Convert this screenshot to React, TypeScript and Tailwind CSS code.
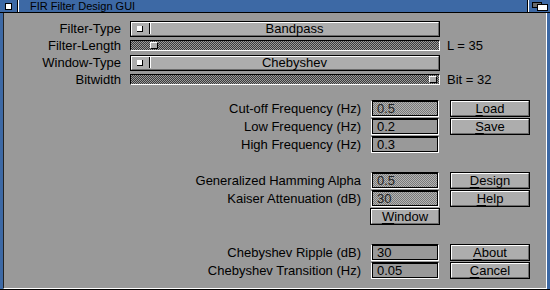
import React from "react";

type Row = {
  label: string;
  value?: string;
  dither?: boolean;
  btn?: string;
  window?: boolean;
} | null;

const rows: Row[] = [
  { label: "Cut-off Frequency (Hz)", value: "0.5", dither: true, btn: "Load" },
  { label: "Low Frequency (Hz)", value: "0.2", btn: "Save" },
  { label: "High Frequency (Hz)", value: "0.3" },
  null,
  { label: "Generalized Hamming Alpha", value: "0.5", dither: true, btn: "Design" },
  { label: "Kaiser Attenuation (dB)", value: "30", dither: true, btn: "Help" },
  { label: "", window: true },
  null,
  { label: "Chebyshev Ripple (dB)", value: "30", btn: "About" },
  { label: "Chebyshev Transition (Hz)", value: "0.05", btn: "Cancel" },
];

function Button({ text, width }: { text: string; width: string }) {
  return (
    <div className={`${width} h-[17px] border border-black bg-[#adadad]`}>
      <div className="h-full border border-t-white border-l-white border-b-[#6a6a6a] border-r-[#6a6a6a] flex items-center justify-center">
        <span>
          <span className="underline underline-offset-[2px]">{text[0]}</span>
          {text.slice(1)}
        </span>
      </div>
    </div>
  );
}

function Field({ value, dither }: { value: string; dither?: boolean }) {
  return (
    <div className="w-[68px] h-[17px] border-t border-t-black border-l border-l-white border-r border-r-white border-b border-b-white">
      <div
        className={`h-full border border-black flex items-center pl-[4px] ${
          dither
            ? "bg-[image:repeating-conic-gradient(#7a7a7a_0_25%,#b4b4b4_0_50%)] bg-[length:2px_2px] text-[#222]"
            : "bg-[#999999]"
        }`}
      >
        {value}
      </div>
    </div>
  );
}

function Cycle({ text }: { text: string }) {
  return (
    <div className="w-[310px] h-[16px] border border-black bg-[#adadad]">
      <div className="h-full border border-t-white border-l-white border-b-[#6a6a6a] border-r-[#6a6a6a] flex items-center">
        <div className="ml-[5px] w-[6px] h-[6px] bg-white border-r border-b border-black" />
        <div className="ml-[6px] h-[11px] w-[2px] flex">
          <div className="w-px bg-black" />
          <div className="w-px bg-white" />
        </div>
        <div className="flex-1 text-center">{text}</div>
      </div>
    </div>
  );
}

function Slider({ atEnd, offset }: { atEnd?: boolean; offset?: string }) {
  return (
    <div className="w-[310px] h-[11px] border border-t-black border-l-black border-b-white border-r-white bg-[image:repeating-conic-gradient(#3a3a3a_0_25%,#9a9a9a_0_50%)] bg-[length:2px_2px] flex items-center">
      <div
        className={`w-[8px] h-[7px] bg-[#adadad] border border-t-white border-l-white border-b-black border-r-black ${
          atEnd ? "ml-auto mr-[2px]" : offset
        }`}
      />
    </div>
  );
}

export default function App() {
  return (
    <div className="w-[550px] h-[290px] bg-[#3d69a5] flex flex-col font-['Liberation_Sans',Arial,sans-serif] text-[13px] leading-none text-black">
      {/* title bar */}
      <div className="h-[13px] flex border-b border-black">
        <div className="w-[17px] flex items-center justify-center">
          <div className="w-[7px] h-[7px] bg-white border border-black" />
        </div>
        <div className="w-px bg-black" />
        <div className="w-px bg-white" />
        <div className="ml-[11px] text-[11px] flex items-center">FIR Filter Design GUI</div>
        <div className="ml-auto w-px bg-black" />
        <div className="w-px bg-white" />
        <div className="w-[21px] flex items-center justify-center">
          <svg width="16" height="9" viewBox="0 0 16 9">
            <rect x="0.5" y="0.5" width="9" height="5" fill="#6b6b6b" stroke="#000" />
            <rect x="5.5" y="2.5" width="10" height="6" fill="#fff" stroke="#000" />
          </svg>
        </div>
      </div>

      <div className="flex-1 flex min-h-0">
        <div className="w-[3px]" />
        <div className="flex-1 bg-[#999999] border-l border-l-[#222] border-r border-r-white border-b border-b-white flex flex-col pt-[7px]">
          {/* top controls */}
          <div className="flex items-center h-[17px]">
            <div className="w-[117px] text-right">Filter-Type</div>
            <div className="ml-[9px]">
              <Cycle text="Bandpass" />
            </div>
          </div>
          <div className="flex items-center h-[17px]">
            <div className="w-[117px] text-right">Filter-Length</div>
            <div className="ml-[9px]">
              <Slider offset="ml-[19px]" />
            </div>
            <div className="ml-[7px]">L = 35</div>
          </div>
          <div className="flex items-center h-[17px]">
            <div className="w-[117px] text-right">Window-Type</div>
            <div className="ml-[9px]">
              <Cycle text="Chebyshev" />
            </div>
          </div>
          <div className="flex items-center h-[17px]">
            <div className="w-[117px] text-right">Bitwidth</div>
            <div className="ml-[9px]">
              <Slider atEnd />
            </div>
            <div className="ml-[7px]">Bit = 32</div>
          </div>

          {/* parameter rows */}
          <div className="mt-[12px] flex flex-col">
            {rows.map((r, i) =>
              r === null ? (
                <div key={i} className="h-[18px]" />
              ) : (
                <div key={i} className="h-[18px] flex items-start">
                  <div className="w-[357px] h-[17px] flex items-center justify-end">{r.label}</div>
                  {r.window ? (
                    <div className="ml-[9px]">
                      <Button text="Window" width="w-[70px]" />
                    </div>
                  ) : (
                    <div className="ml-[10px]">
                      <Field value={r.value ?? ""} dither={r.dither} />
                    </div>
                  )}
                  {r.btn && (
                    <div className="ml-[11px]">
                      <Button text={r.btn} width="w-[80px]" />
                    </div>
                  )}
                </div>
              )
            )}
          </div>
        </div>
        <div className="w-[3px]" />
      </div>
      <div className="h-px bg-black" />
    </div>
  );
}
